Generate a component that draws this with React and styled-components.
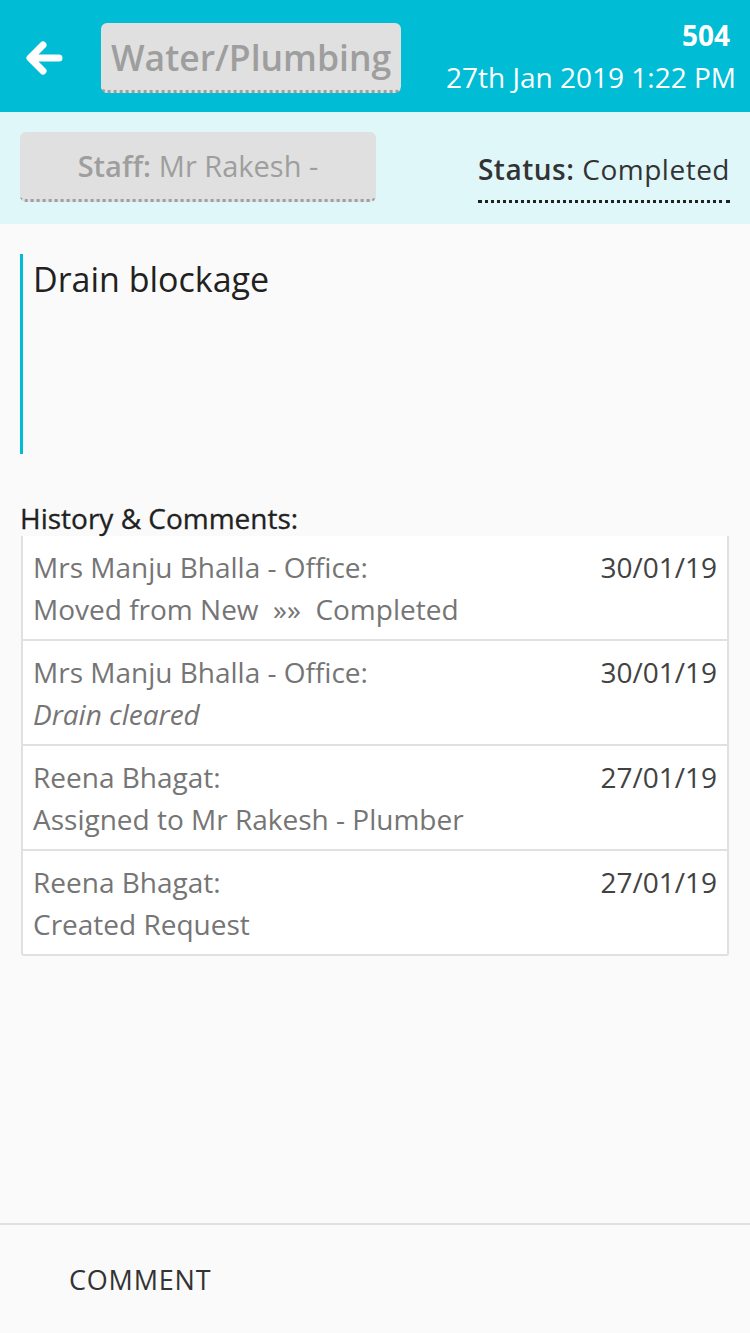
import React from "react";
import styled, { createGlobalStyle } from "styled-components";

const Global = createGlobalStyle`
  html, body {
    margin: 0;
    padding: 0;
    background: #fafafa;
    font-family: "Open Sans", "Noto Sans", sans-serif;
  }
  #root {
    min-height: 1333px;
  }
`;

const history = [
  { who: "Mrs Manju Bhalla - Office:", date: "30/01/19", text: "Moved from New  \u00bb\u00bb  Completed" },
  { who: "Mrs Manju Bhalla - Office:", date: "30/01/19", text: "Drain cleared", note: true },
  { who: "Reena Bhagat:", date: "27/01/19", text: "Assigned to Mr Rakesh - Plumber" },
  { who: "Reena Bhagat:", date: "27/01/19", text: "Created Request" },
];

const App = () => {
  return (
    <Page>
      <Global />
      <Header>
        <BackButton aria-label="back">
          <svg width="38" height="38" viewBox="0 0 38 38">
            <path
              d="M18 6 L5 19 L18 32 M6 19 H34"
              fill="none"
              stroke="#fff"
              strokeWidth="7"
              strokeLinecap="round"
              strokeLinejoin="round"
            />
          </svg>
        </BackButton>
        <Category>Water/Plumbing</Category>
        <Meta>
          <Flat>504</Flat>
          <Stamp>27th Jan 2019 1:22 PM</Stamp>
        </Meta>
      </Header>

      <SubBar>
        <StaffButton>
          <b>Staff:</b> Mr Rakesh -
        </StaffButton>
        <Status>
          <b>Status:</b> Completed
        </Status>
      </SubBar>

      <Body>
        <Description>Drain blockage</Description>
        <SectionTitle>History &amp; Comments:</SectionTitle>
        <HistoryList>
          {history.map((h, i) => (
            <HistoryItem key={i}>
              <ItemTop>
                <Who>{h.who}</Who>
                <When>{h.date}</When>
              </ItemTop>
              <What $note={h.note}>{h.text}</What>
            </HistoryItem>
          ))}
        </HistoryList>
      </Body>

      <Footer>
        <CommentButton>COMMENT</CommentButton>
      </Footer>
    </Page>
  );
};

const Page = styled.div`
  display: flex;
  flex-direction: column;
  min-height: 1333px;
  background: #fafafa;
`;

const Header = styled.div`
  display: flex;
  align-items: center;
  height: 112px;
  padding: 0 14px 0 25px;
  background: #00bcd4;
  box-sizing: border-box;
`;

const BackButton = styled.div`
  display: flex;
  width: 38px;
  height: 38px;
  margin: 4px 38px 0 0;
`;

const Category = styled.div`
  height: 70px;
  box-sizing: border-box;
  padding: 0 10px;
  display: flex;
  align-items: center;
  background: #e0e0e0;
  border-radius: 6px;
  border-bottom: 3px dotted #9e9e9e;
  color: #9e9e9e;
  font-size: 35.5px;
  font-weight: 600;
  margin-top: 4px;
`;

const Meta = styled.div`
  margin: 8px 0 0 auto;
  display: flex;
  flex-direction: column;
  align-items: flex-end;
  color: #fff;
`;

const Flat = styled.div`
  font-size: 28px;
  font-weight: 700;
  line-height: 34px;
  margin-right: 6px;
`;

const Stamp = styled.div`
  font-size: 28px;
  line-height: 50px;
`;

const SubBar = styled.div`
  display: flex;
  align-items: center;
  justify-content: space-between;
  height: 112px;
  padding: 0 20px;
  background: #e0f7fa;
  box-sizing: border-box;
`;

const StaffButton = styled.div`
  width: 356px;
  height: 70px;
  margin-top: -2px;
  box-sizing: border-box;
  display: flex;
  align-items: center;
  justify-content: center;
  gap: 8px;
  background: #e0e0e0;
  border-radius: 6px;
  border-bottom: 3px dotted #9e9e9e;
  color: #9e9e9e;
  font-size: 29px;

  b {
    font-weight: 600;
  }
`;

const Status = styled.div`
  display: flex;
  gap: 8px;
  padding-bottom: 12px;
  margin-top: 16px;
  border-bottom: 3px dotted #212121;
  color: #333;
  font-size: 28px;
  letter-spacing: 0.5px;

  b {
    font-weight: 600;
  }
`;

const Body = styled.div`
  flex: 1;
  padding: 30px 20px 0;
`;

const Description = styled.div`
  height: 200px;
  box-sizing: border-box;
  border-left: 3px solid #00bcd4;
  padding: 2px 10px;
  color: #212121;
  font-size: 34px;
`;

const SectionTitle = styled.div`
  margin-top: 46px;
  color: #212121;
  font-size: 28px;
  font-weight: 500;
  line-height: 36px;
  -webkit-text-stroke: 0.3px #212121;
`;

const HistoryList = styled.div`
  margin: 0 1px;
  background: #fff;
  border: 2px solid #e0e0e0;
  border-top: none;
  border-radius: 0 0 3px 3px;
`;

const HistoryItem = styled.div`
  padding: 10px 10px 9px 10px;
  & + & {
    border-top: 2px solid #e0e0e0;
  }
`;

const ItemTop = styled.div`
  display: flex;
  justify-content: space-between;
`;

const Who = styled.div`
  color: #757575;
  font-size: 28px;
  line-height: 42px;
`;

const When = styled.div`
  color: #424242;
  font-size: 28px;
  line-height: 42px;
`;

const What = styled.div`
  color: #757575;
  font-size: 28px;
  line-height: 42px;
  font-style: ${(p) => (p.$note ? "italic" : "normal")};
  white-space: pre;
`;

const Footer = styled.div`
  height: 110px;
  border-top: 2px solid #e0e0e0;
  display: flex;
  align-items: center;
  padding-left: 69px;
  box-sizing: border-box;
`;

const CommentButton = styled.div`
  color: #333;
  font-size: 27px;
  letter-spacing: 0.8px;
`;

export default App;
